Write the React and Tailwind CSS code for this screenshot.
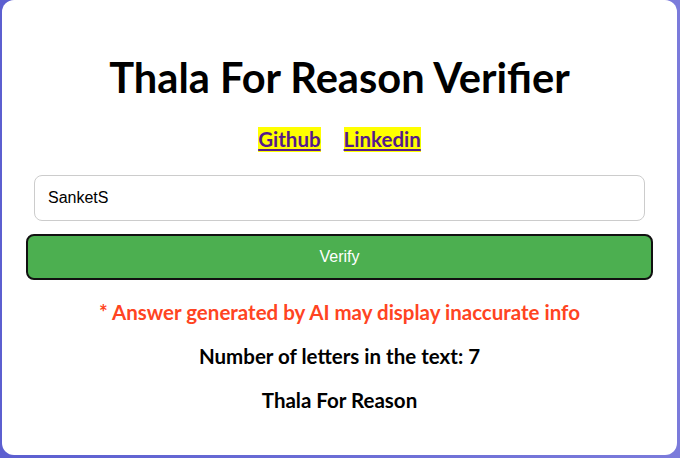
export default function App() {
  return (
    <div className="w-[680px] h-[458px] overflow-hidden bg-gradient-to-r from-[#5c5fd0] to-[#7b7bdb] pl-[2px] pr-[3px] pb-[3px]" style={{ fontFamily: "Lato, 'Liberation Sans', sans-serif" }}>
      <div className="h-full bg-white rounded-[12px] flex flex-col items-center px-[24px]">
        <h1 className="mt-[53px] text-[41.6px] leading-[48px] font-bold text-black">Thala For Reason Verifier</h1>
        <div className="mt-[26px] flex gap-[23px] text-[20.5px] font-bold leading-[25px]">
          <a href="#" className="bg-[#ffff00] text-[#551a8b] underline">Github</a>
          <a href="#" className="bg-[#ffff00] text-[#551a8b] underline">Linkedin</a>
        </div>
        <input
          className="mt-[23px] w-[611px] h-[46px] border border-[#cccccc] rounded-[8px] px-[13px] text-[16px] text-black outline-none"
          style={{ fontFamily: "'Liberation Sans', Arial, sans-serif" }}
          defaultValue="SanketS"
        />
        <button
          className="mt-[13px] w-[627px] h-[46px] bg-[#4caf50] border-2 border-[#111111] rounded-[8px] text-white text-[16px]"
          style={{ fontFamily: "'Liberation Sans', Arial, sans-serif" }}
        >
          Verify
        </button>
        <p className="mt-[20px] text-[20.5px] leading-[24px] font-bold text-[#ff4422]">* Answer generated by AI may display inaccurate info</p>
        <p className="mt-[20px] text-[20.5px] leading-[24px] font-bold text-black">Number of letters in the text: 7</p>
        <p className="mt-[20px] text-[20.5px] leading-[24px] font-bold text-black">Thala For Reason</p>
      </div>
    </div>
  );
}
